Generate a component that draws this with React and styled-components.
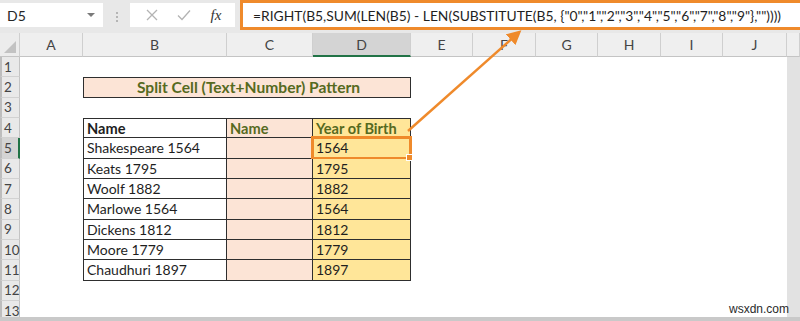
import React from 'react';
import styled, { createGlobalStyle, css } from 'styled-components';

const GlobalStyle = createGlobalStyle`
  html, body {
    margin: 0;
    padding: 0;
    background: #ffffff;
    overflow: hidden;
  }
`;

const ORANGE = '#ef8a2b';
const OLIVE = '#566a1f';
const GREEN = '#217346';
const PINK = '#fce4d6';
const YELLOW = '#ffe699';
const LINE = '#2e2e2e';

const COLS = [20, 63, 144, 86, 98, 62, 63, 62, 63, 62, 64, 13];
const LETTERS = ['A', 'B', 'C', 'D', 'E', 'F', 'G', 'H', 'I', 'J', ''];

const Frame = styled.div`
  position: relative;
  width: 800px;
  height: 321px;
  background: #fff;
  overflow: hidden;
  font-family: Lato, 'Noto Sans', sans-serif;
  border-bottom: 4px solid #c9c9c9;
  box-sizing: border-box;
`;

const Toolbar = styled.div`
  height: 33px;
  background: #e8e8e8;
  display: flex;
  align-items: flex-start;
`;

const NameBox = styled.div`
  width: 103px;
  height: 24px;
  margin-top: 3px;
  background: #fff;
  display: flex;
  align-items: center;
  justify-content: space-between;
  padding: 0 8px 0 7px;
  box-sizing: border-box;
  font-size: 14px;
  color: #262626;
`;

const Caret = styled.span`
  width: 0;
  height: 0;
  border-left: 4px solid transparent;
  border-right: 4px solid transparent;
  border-top: 4px solid #7a7a7a;
`;

const Dots = styled.div`
  width: 27px;
  height: 33px;
  display: flex;
  flex-direction: column;
  align-items: center;
  justify-content: center;
  gap: 2px;

  span {
    width: 2px;
    height: 2px;
    background: #b5b5b5;
  }
`;

const IconPanel = styled.div`
  width: 105px;
  height: 24px;
  margin-top: 3px;
  background: #fff;
  display: flex;
  align-items: center;
  justify-content: space-around;
  padding: 0 4px 0 6px;
  box-sizing: border-box;
`;

const Fx = styled.span`
  font-family: 'Liberation Serif', serif;
  font-style: italic;
  font-size: 15px;
  color: #333;
`;

const FormulaBox = styled.div`
  flex: 1;
  height: 30px;
  margin-left: 5px;
  border: 3px solid ${ORANGE};
  border-right: none;
  background: #fff;
  box-sizing: border-box;
  display: flex;
  align-items: center;
  padding-left: 10px;
  font-size: 13.85px;
  color: #1f1f1f;
  white-space: nowrap;
  overflow: hidden;
`;

const Sheet = styled.div`
  display: grid;
  grid-template-columns: ${COLS.map((c) => `${c}px`).join(' ')};
  grid-template-rows: 24px repeat(13, 20.33px);
`;

const Corner = styled.div`
  background: #ececec;
  border-right: 1px solid #cfcfcf;
  border-bottom: 1px solid #c4c4c4;
  position: relative;

  &::after {
    content: '';
    position: absolute;
    right: 3px;
    bottom: 3px;
    width: 0;
    height: 0;
    border-left: 12px solid transparent;
    border-bottom: 12px solid #c2c2c2;
  }
`;

const ColHead = styled.div`
  display: flex;
  align-items: center;
  justify-content: center;
  font-size: 14px;
  color: #444;
  background: ${(p) => (p.$active ? '#d4d4d4' : '#efefef')};
  border-right: 1px solid #cfcfcf;
  border-bottom: ${(p) => (p.$active ? `2px solid ${GREEN}` : '1px solid #c4c4c4')};
  box-sizing: border-box;
`;

const RowHead = styled.div`
  display: flex;
  align-items: center;
  padding-left: 2px;
  font-size: 13.5px;
  color: #444;
  background: ${(p) => (p.$active ? '#d4d4d4' : '#e9e9e9')};
  border-left: 2px solid #bdbdbd;
  border-bottom: 1px solid #d2d2d2;
  border-right: ${(p) => (p.$active ? `2px solid ${GREEN}` : '1px solid #c4c4c4')};
  box-sizing: border-box;
`;

const Cell = styled.div`
  position: relative;
  display: flex;
  align-items: center;
  padding-left: 3px;
  box-sizing: border-box;
  font-size: ${(p) => (p.$bold ? '14.6px' : '14px')};
  white-space: nowrap;
  background: ${(p) => p.$bg || 'transparent'};
  color: ${(p) => p.$color || '#1e1e1e'};
  font-weight: ${(p) => (p.$bold ? 700 : 400)};

  ${(p) =>
    p.$boxed &&
    css`
      border-right: 1px solid ${LINE};
      border-bottom: 1px solid ${LINE};
    `}
  ${(p) => p.$left && css`border-left: 1px solid ${LINE};`}
  ${(p) => p.$top && css`border-top: 1px solid ${LINE};`}
  ${(p) => p.$edge && css`background: #e2e2e2;`}

  ${(p) =>
    p.$selected &&
    css`
      &::after {
        content: '';
        position: absolute;
        inset: -2px -2px -2px -2px;
        border: 3px solid ${ORANGE};
        pointer-events: none;
      }
      &::before {
        content: '';
        position: absolute;
        right: -3px;
        bottom: -3px;
        width: 5px;
        height: 5px;
        background: ${ORANGE};
        border: 1px solid #fff;
        z-index: 2;
      }
    `}
`;

const Title = styled(Cell)`
  grid-column: span 3;
  justify-content: center;
  font-size: 15.6px;
  border: 1px solid ${LINE};
`;

const Overlay = styled.svg`
  position: absolute;
  left: 0;
  top: 0;
  pointer-events: none;
`;

const Watermark = styled.div`
  position: absolute;
  right: 11px;
  bottom: 1px;
  font-family: 'Liberation Sans', Arial, sans-serif;
  font-size: 12px;
  color: #2a2a2a;
`;

const data = [
  ['Shakespeare 1564', '1564'],
  ['Keats 1795', '1795'],
  ['Woolf 1882', '1882'],
  ['Marlowe 1564', '1564'],
  ['Dickens 1812', '1812'],
  ['Moore 1779', '1779'],
  ['Chaudhuri 1897', '1897'],
];

const formula =
  '=RIGHT(B5,SUM(LEN(B5) - LEN(SUBSTITUTE(B5, {"0","1","2","3","4","5","6","7","8","9"},""))))';

const blanks = (from, to, row) =>
  LETTERS.slice(from, to).map((l, i) => <Cell key={`${row}-${from + i}`} $edge={from + i === 10} />);

function renderRow(r) {
  const active = r === 5;
  const head = (
    <RowHead key={`h${r}`} $active={active}>
      {r}
    </RowHead>
  );

  if (r === 2) {
    return [
      head,
      ...blanks(0, 1, r),
      <Title key="title" $bg={PINK} $color={OLIVE} $bold>
        Split Cell (Text+Number) Pattern
      </Title>,
      ...blanks(4, 11, r),
    ];
  }

  if (r === 4) {
    return [
      head,
      ...blanks(0, 1, r),
      <Cell key="b4" $boxed $left $top $bold>Name</Cell>,
      <Cell key="c4" $boxed $top $bold $bg={PINK} $color={OLIVE}>Name</Cell>,
      <Cell key="d4" $boxed $top $bold $bg={YELLOW} $color={OLIVE}>Year of Birth</Cell>,
      ...blanks(4, 11, r),
    ];
  }

  if (r >= 5 && r <= 11) {
    const [name, year] = data[r - 5];
    return [
      head,
      ...blanks(0, 1, r),
      <Cell key={`b${r}`} $boxed $left>{name}</Cell>,
      <Cell key={`c${r}`} $boxed $bg={PINK} />,
      <Cell key={`d${r}`} $boxed $bg={YELLOW} $selected={active}>{year}</Cell>,
      ...blanks(4, 11, r),
    ];
  }

  return [head, ...blanks(0, 11, r)];
}

export default function App() {
  const rows = Array.from({ length: 13 }, (_, i) => i + 1);

  return (
    <>
      <GlobalStyle />
      <Frame>
        <Toolbar>
          <NameBox>
            D5
            <Caret />
          </NameBox>
          <Dots>
            <span />
            <span />
            <span />
          </Dots>
          <IconPanel>
            <svg width="12" height="12" viewBox="0 0 12 12">
              <path d="M1 1 L11 11 M11 1 L1 11" stroke="#b3b3b3" strokeWidth="1.3" fill="none" />
            </svg>
            <svg width="14" height="12" viewBox="0 0 14 12">
              <path d="M1 6.5 L5 10.5 L13 1.5" stroke="#b3b3b3" strokeWidth="1.3" fill="none" />
            </svg>
            <Fx>fx</Fx>
          </IconPanel>
          <FormulaBox>{formula}</FormulaBox>
        </Toolbar>

        <Sheet>
          <Corner />
          {LETTERS.map((l, i) => (
            <ColHead key={`col${i}`} $active={l === 'D'}>
              {l}
            </ColHead>
          ))}
          {rows.map((r) => renderRow(r))}
        </Sheet>

        <Overlay width="800" height="321" viewBox="0 0 800 321">
          <defs>
            <marker id="head" markerWidth="6" markerHeight="6" refX="3" refY="3" orient="auto">
              <path d="M0 0 L6 3 L0 6 Z" fill={ORANGE} />
            </marker>
          </defs>
          <line x1="408" y1="131" x2="516" y2="35" stroke={ORANGE} strokeWidth="2.4" markerEnd="url(#head)" />
        </Overlay>

        <Watermark>wsxdn.com</Watermark>
      </Frame>
    </>
  );
}
